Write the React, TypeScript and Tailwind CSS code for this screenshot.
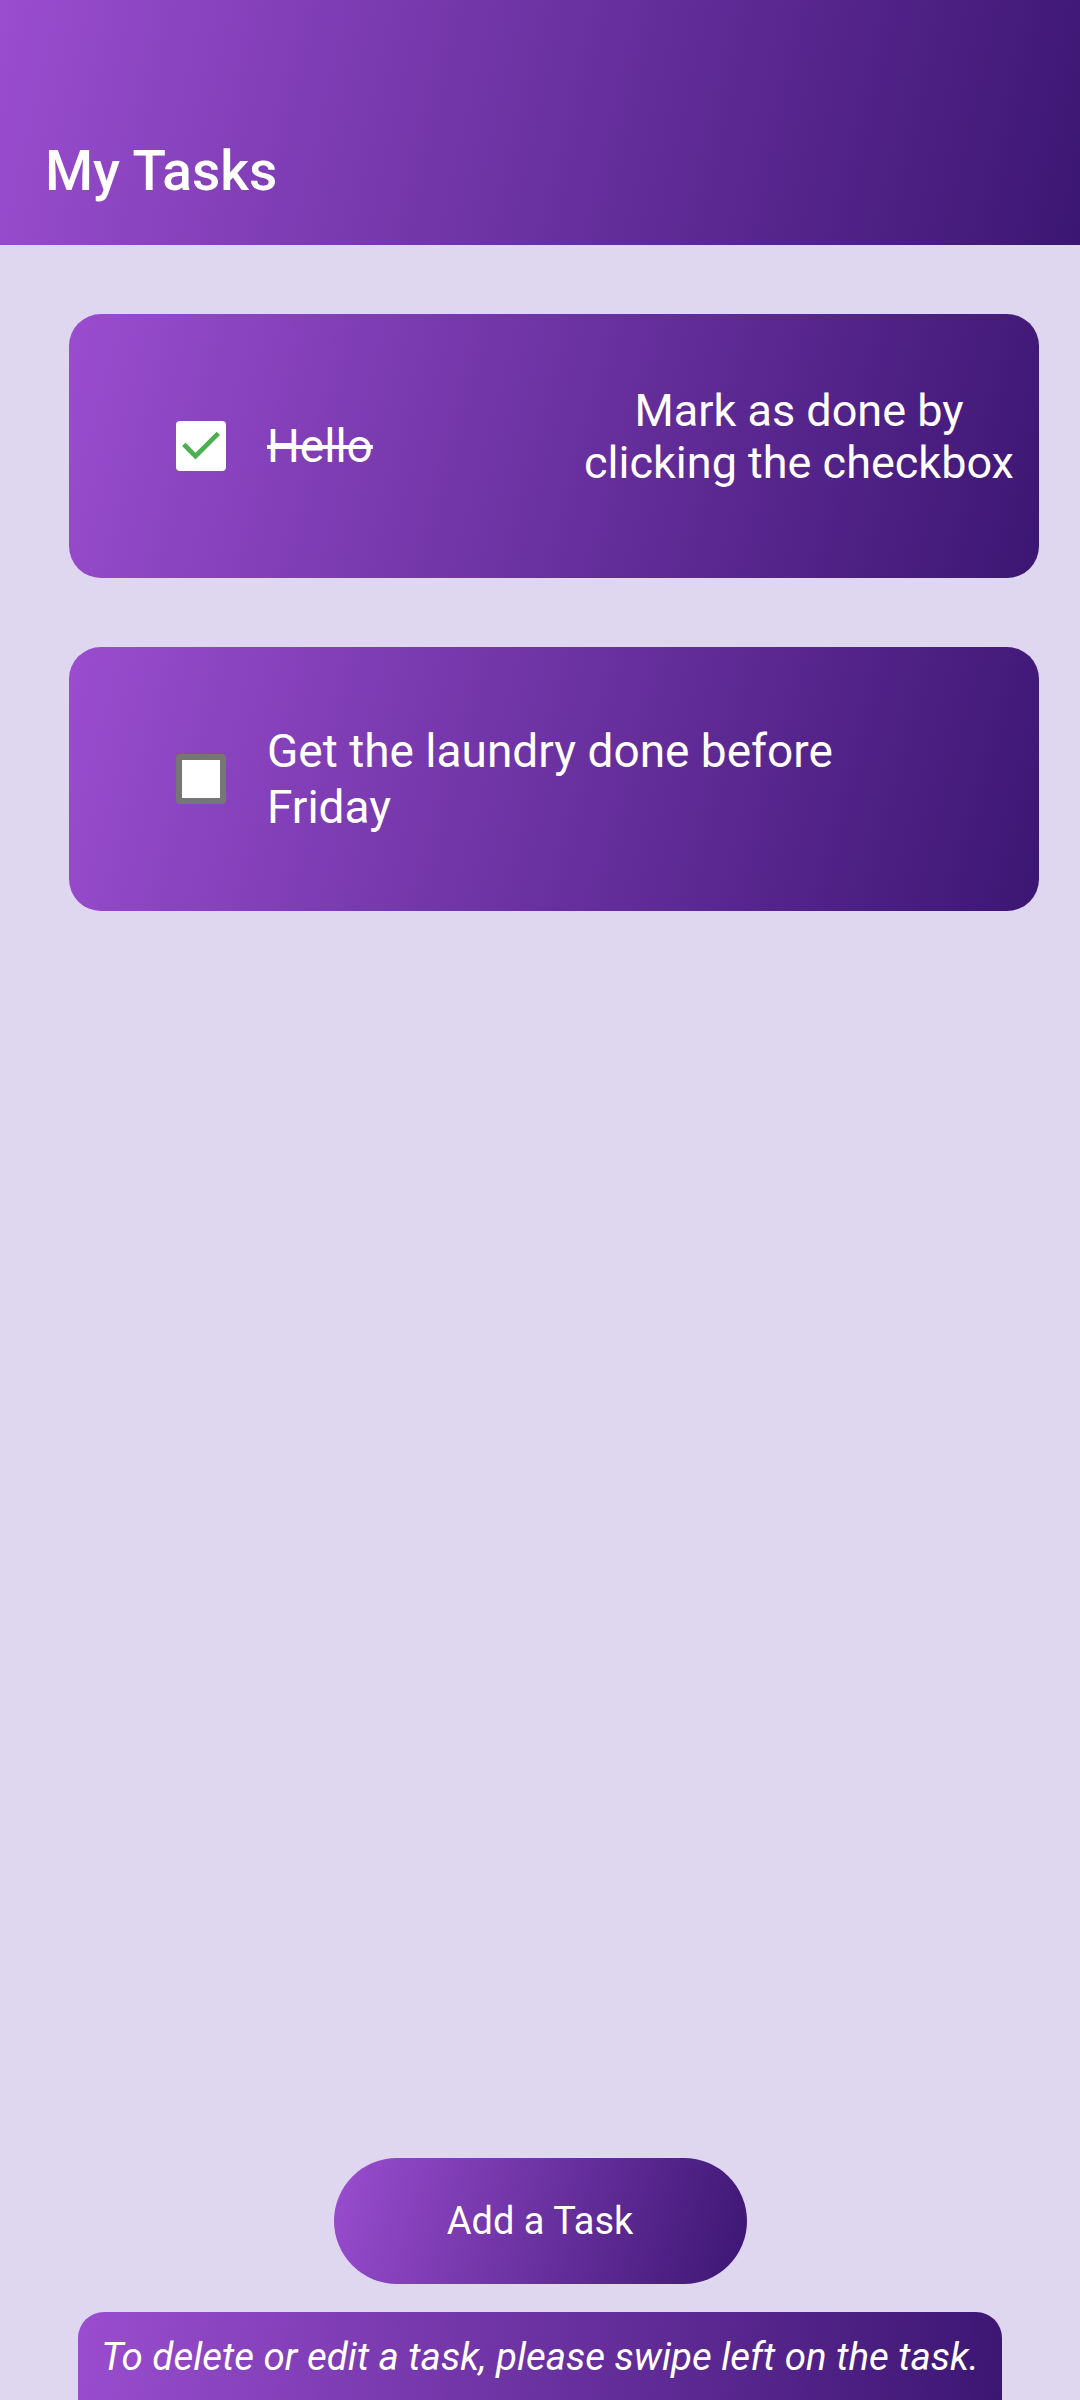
import React from 'react'

type Task = {
    id: number
    title: string
    done: boolean
    hint?: string
}

const tasks: Task[] = [
    { id: 1, title: 'Hello', done: true, hint: 'Mark as done by clicking the checkbox' },
    { id: 2, title: 'Get the laundry done before Friday', done: false },
]

const CheckBox = ({ checked }: { checked: boolean }) => (
    checked ? (
        <div className="w-[50px] h-[50px] shrink-0 bg-white rounded-[4px] flex items-center justify-center">
            <svg width="44" height="44" viewBox="0 0 24 24" fill="none">
                <path d="M3.5 12l5.5 5.5L20.5 6" stroke="#4caf50" strokeWidth="2.6" strokeLinecap="square" />
            </svg>
        </div>
    ) : (
        <div className="w-[50px] h-[50px] shrink-0 bg-white rounded-[4px] border-[6px] border-[#767676]" />
    )
)

const TaskCard = ({ task }: { task: Task }) => (
    <div className="bg-linear-[105deg] from-[#9a4dcf] to-[#3c1673] h-[264px] rounded-[32px] flex items-center pl-[107px] pr-[20px] text-white">
        <CheckBox checked={task.done} />
        <p className={`ml-[41px] text-[46px] leading-[56px] ${task.done ? 'line-through' : ''} ${task.hint ? 'flex-1' : 'w-[620px]'}`}>
            {task.title}
        </p>
        {task.hint && (
            <p className="w-[440px] mb-[18px] text-center text-[45px] leading-[52px]">{task.hint}</p>
        )}
    </div>
)

export default function App() {
    return (
        <div className="w-[1080px] h-[2400px] overflow-hidden bg-[#dfd6ef] flex flex-col" style={{ fontFamily: 'Roboto, "Noto Sans", sans-serif' }}>
            <header className="bg-linear-[103deg] from-[#9a4dcf] to-[#3c1673] h-[245px] shrink-0 pl-[45px] pt-[144px]">
                <h1 className="text-white text-[55px] leading-none font-medium">My Tasks</h1>
            </header>

            <div className="flex flex-col gap-[69px] pt-[69px] pl-[69px] pr-[41px]">
                {tasks.map((task) => (
                    <TaskCard key={task.id} task={task} />
                ))}
            </div>

            <div className="flex-1" />

            <div className="flex justify-center">
                <button className="bg-linear-[107deg] from-[#9a4dcf] to-[#3c1673] w-[413px] h-[126px] rounded-full text-white text-[38px]">
                    Add a Task
                </button>
            </div>

            <div className="mt-[28px] mx-[78px] h-[88px] shrink-0 rounded-t-[26px] bg-linear-[98deg] from-[#9a4dcf] to-[#3c1673] pt-[22px] text-center">
                <p className="text-white italic text-[38.5px] leading-[46px] whitespace-nowrap">To delete or edit a task, please swipe left on the task.</p>
            </div>
        </div>
    )
}
